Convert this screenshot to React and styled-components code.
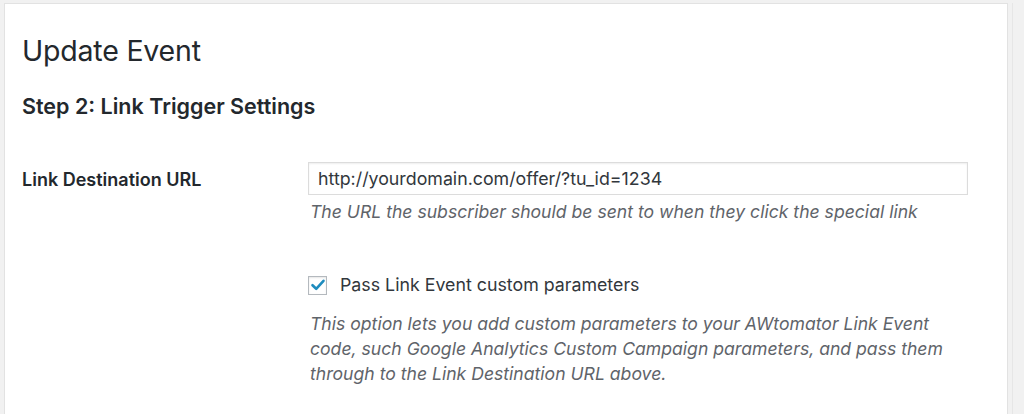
import React from "react";
import styled, { createGlobalStyle } from "styled-components";

const Global = createGlobalStyle`
  html, body { margin: 0; padding: 0; background: #f1f1f1; overflow: hidden; }
  body { font-family: Inter, "Open Sans", "Liberation Sans", sans-serif; color: #23282d; }
`;

const Page = styled.div`
  display: flex;
  align-items: flex-start;
  height: 414px;
  padding-top: 3px;
  box-sizing: border-box;
`;

const Panel = styled.div`
  margin-left: 4px;
  width: 1004px;
  height: 430px;
  box-sizing: border-box;
  background: #fff;
  border: 1px solid #e2e2e2;
  padding: 28px 0 0 17px;
`;

const Gutter = styled.div`
  margin-left: 4px;
  width: 1px;
  height: 430px;
  background: #e6e6e6;
`;

const Title = styled.h1`
  margin: 0;
  font-size: 28.5px;
  font-weight: 400;
  line-height: 38px;
  letter-spacing: -0.2px;
  color: #23282d;
`;

const StepTitle = styled.h2`
  margin: 22px 0 0;
  font-size: 21.5px;
  font-weight: 600;
  line-height: 28px;
  color: #23282d;
`;

const FormGrid = styled.div`
  display: grid;
  grid-template-columns: 286px 660px;
  margin-top: 42px;
`;

const Label = styled.div`
  font-size: 18px;
  font-weight: 600;
  line-height: 24px;
  padding-top: 6px;
  color: #23282d;
`;

const Field = styled.div`
  display: flex;
  flex-direction: column;
  align-items: flex-start;
  padding-bottom: ${(p) => p.$pb || 0}px;
`;

const TextInput = styled.input`
  width: 660px;
  height: 33px;
  box-sizing: border-box;
  border: 1px solid #dcdcdc;
  box-shadow: inset 0 1px 2px rgba(0, 0, 0, 0.07);
  padding: 0 9px;
  font-family: inherit;
  font-size: 17.8px;
  color: #32373c;
  background: #fff;
  outline: none;
`;

const Description = styled.p`
  margin: ${(p) => p.$mt || 0}px 0 0 2px;
  font-size: 17.6px;
  font-style: italic;
  line-height: 25px;
  color: #5f646a;
  white-space: nowrap;
`;

const CheckRow = styled.label`
  display: flex;
  align-items: center;
  gap: 13px;
  font-size: 17.8px;
  line-height: 22px;
  color: #32373c;
`;

const Box = styled.span`
  width: 19px;
  height: 19px;
  box-sizing: border-box;
  border: 1px solid #b4b9be;
  box-shadow: inset 0 1px 2px rgba(0, 0, 0, 0.1);
  background: #fff;
  display: flex;
  align-items: center;
  justify-content: center;
`;

export default function App() {
  return (
    <>
      <Global />
      <Page>
        <Panel>
          <Title>Update Event</Title>
          <StepTitle>Step 2: Link Trigger Settings</StepTitle>
          <FormGrid>
            <Label>Link Destination URL</Label>
            <Field $pb={50}>
              <TextInput defaultValue="http://yourdomain.com/offer/?tu_id=1234" />
              <Description $mt={4}>
                The URL the subscriber should be sent to when they click the special link
              </Description>
            </Field>
            <div />
            <Field>
              <CheckRow>
                <Box>
                  <svg width="16" height="16" viewBox="0 0 16 16">
                    <path d="M2.5 8.2 L6.2 11.8 L13.5 3.8" fill="none" stroke="#1e8cbe" strokeWidth="2.6" strokeLinecap="round" strokeLinejoin="round" />
                  </svg>
                </Box>
                Pass Link Event custom parameters
              </CheckRow>
              <Description $mt={15}>
                This option lets you add custom parameters to your AWtomator Link Event
                <br />
                code, such Google Analytics Custom Campaign parameters, and pass them
                <br />
                through to the Link Destination URL above.
              </Description>
            </Field>
          </FormGrid>
        </Panel>
        <Gutter />
      </Page>
    </>
  );
}
